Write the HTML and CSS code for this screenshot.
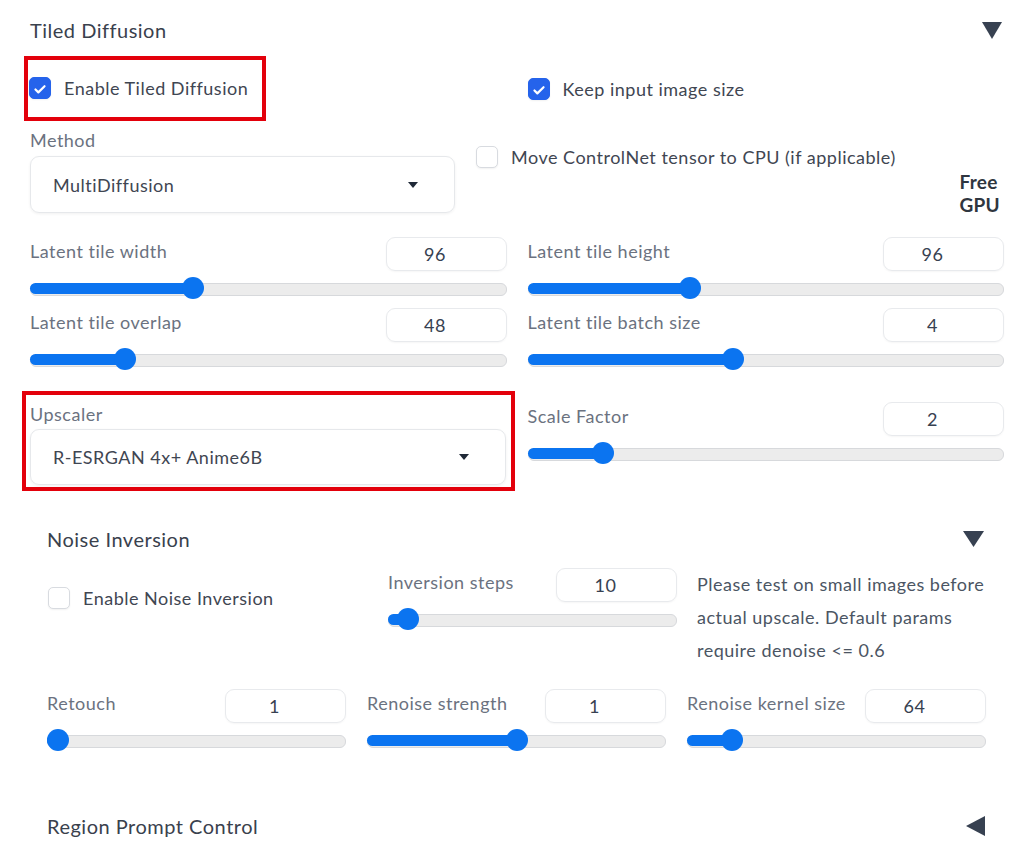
FILE: index.html
```html
<!DOCTYPE html>
<html>
<head>
<meta charset="utf-8">
<link rel="stylesheet" href="styles.css">
</head>
<body>
<div class="panel">
  <div class="head">
    <span class="title">Tiled Diffusion</span>
    <svg class="tri-down" width="20" height="17" viewBox="0 0 20 17"><path d="M0 0H20L10 17Z" fill="#374151"/></svg>
  </div>

  <div class="grid2 row1">
    <div><div class="redbox rb1"><label class="check"><span class="box on"><svg viewBox="0 0 22 22" width="22" height="22"><path d="M6 11.5l3.2 3.2L16 8" fill="none" stroke="#fff" stroke-width="2.4" stroke-linecap="round" stroke-linejoin="round"/></svg></span><span>Enable Tiled Diffusion</span></label></div></div>
    <div class="c-center"><label class="check"><span class="box on"><svg viewBox="0 0 22 22" width="22" height="22"><path d="M6 11.5l3.2 3.2L16 8" fill="none" stroke="#fff" stroke-width="2.4" stroke-linecap="round" stroke-linejoin="round"/></svg></span><span>Keep input image size</span></label></div>
  </div>

  <div class="row2">
    <div class="method">
      <div class="lbl">Method</div>
      <div class="dropdown"><span>MultiDiffusion</span><span class="caret"></span></div>
    </div>
    <div class="move"><label class="check"><span class="box"></span><span>Move ControlNet tensor to CPU (if applicable)</span></label></div>
    <div class="free">Free<br>GPU</div>
  </div>

  <div class="grid2 sliders">
    <div class="sl">
      <div class="sl-top"><span class="lbl">Latent tile width</span><span class="num">96</span></div>
      <div class="track" style="--p:34.2%"><div class="fill"></div><div class="thumb"></div></div>
    </div>
    <div class="sl">
      <div class="sl-top"><span class="lbl">Latent tile height</span><span class="num">96</span></div>
      <div class="track" style="--p:34.2%"><div class="fill"></div><div class="thumb"></div></div>
    </div>
    <div class="sl">
      <div class="sl-top"><span class="lbl">Latent tile overlap</span><span class="num">48</span></div>
      <div class="track" style="--p:20%"><div class="fill"></div><div class="thumb"></div></div>
    </div>
    <div class="sl">
      <div class="sl-top"><span class="lbl">Latent tile batch size</span><span class="num">4</span></div>
      <div class="track" style="--p:43.2%"><div class="fill"></div><div class="thumb"></div></div>
    </div>
  </div>

  <div class="grid2 ups-row">
    <div class="redbox rb2">
      <div class="lbl">Upscaler</div>
      <div class="dropdown dd2"><span>R-ESRGAN 4x+ Anime6B</span><span class="caret"></span></div>
    </div>
    <div class="sl scale">
      <div class="sl-top"><span class="lbl">Scale Factor</span><span class="num">2</span></div>
      <div class="track" style="--p:15.9%"><div class="fill"></div><div class="thumb"></div></div>
    </div>
  </div>

  <div class="sub">
    <div class="head sub-head">
      <span class="title">Noise Inversion</span>
      <svg class="tri-down" width="21" height="16" viewBox="0 0 21 16"><path d="M0 0H21L10.5 16Z" fill="#374151"/></svg>
    </div>
    <div class="noise-row">
      <div class="ni-check"><label class="check"><span class="box"></span><span>Enable Noise Inversion</span></label></div>
      <div class="sl">
        <div class="sl-top"><span class="lbl">Inversion steps</span><span class="num">10</span></div>
        <div class="track" style="--p:6.9%"><div class="fill"></div><div class="thumb"></div></div>
      </div>
      <p class="note">Please test on small images before actual upscale. Default params require denoise &lt;= 0.6</p>
    </div>
    <div class="grid3">
      <div class="sl">
        <div class="sl-top"><span class="lbl">Retouch</span><span class="num">1</span></div>
        <div class="track" style="--p:3.7%"><div class="fill"></div><div class="thumb"></div></div>
      </div>
      <div class="sl">
        <div class="sl-top"><span class="lbl">Renoise strength</span><span class="num">1</span></div>
        <div class="track" style="--p:50%"><div class="fill"></div><div class="thumb"></div></div>
      </div>
      <div class="sl">
        <div class="sl-top"><span class="lbl">Renoise kernel size</span><span class="num">64</span></div>
        <div class="track" style="--p:15%"><div class="fill"></div><div class="thumb"></div></div>
      </div>
    </div>
  </div>

  <div class="sub">
    <div class="head region-head">
      <span class="title">Region Prompt Control</span>
      <svg width="19" height="20" viewBox="0 0 19 20"><path d="M19 0V20L0 10Z" fill="#374151"/></svg>
    </div>
  </div>
</div>
</body>
</html>
```

FILE: styles.css
```css
* { box-sizing: border-box; }
body {
  margin: 0;
  background: #fff;
  font-family: Lato, "Noto Sans", sans-serif;
  font-size: 18px;
  letter-spacing: 0.5px;
  color: #374151;
}
.panel { padding: 0 20px 0 30px; width: 1024px; }
.head {
  height: 56px;
  display: flex;
  align-items: center;
  justify-content: space-between;
  padding-top: 4px;
}
.title { font-size: 20px; color: #3a414d; }
.tri-down { margin-right: 2px; }

.grid2 { display: grid; grid-template-columns: 1fr 1fr; column-gap: 21px; }
.row1 { height: 65px; }
.c-center { display: flex; align-items: center; }

.redbox { border: 4px solid #e3000b; }
.rb1 {
  display: inline-flex;
  margin-left: -6px;
  padding: 17px 14px 18px 1px;
}
.rb2 {
  margin: 0 -8px 0 -8px;
  padding: 8px 5px 2px 4px;
}

.check { display: inline-flex; align-items: center; gap: 13px; color: #3f4652; line-height: 22px; }
.box {
  width: 22px; height: 22px; flex: none;
  border-radius: 5px;
  border: 1px solid #d8dbe0;
  background: #fff;
  box-shadow: 0 1px 2px rgba(0,0,0,.06);
  display: flex;
}
.box.on { background: #2563eb; border-color: #2563eb; }

.lbl { color: #6b7280; line-height: 22px; white-space: nowrap; }

.row2 { display: flex; height: 92px; }
.method { width: 425px; padding-top: 8px; }
.method .lbl { margin-bottom: 5px; }
.dropdown {
  height: 57px;
  border: 1px solid #e6e8eb;
  border-radius: 9px;
  box-shadow: 0 1px 3px rgba(0,0,0,.06);
  display: flex;
  align-items: center;
  justify-content: space-between;
  padding: 0 36px 0 22px;
  color: #3f4652;
}
.dd2 { margin-top: 4px; height: 56px; }
.caret {
  width: 0; height: 0;
  border-left: 5.5px solid transparent;
  border-right: 5.5px solid transparent;
  border-top: 6px solid #1f2937;
}
.move { flex: 1; padding: 25px 0 0 21px; }
.free {
  padding: 49px 4px 0 0;
  font-size: 19px;
  line-height: 23px;
  font-weight: 700;
  letter-spacing: 0.3px;
  color: #2f3640;
  text-align: left;
}

.sliders { margin-top: 24px; row-gap: 9px; }
.sl-top { display: flex; justify-content: space-between; align-items: flex-start; }
.sl-top .lbl { margin-top: 3px; }
.num {
  width: 121px; height: 34px;
  border: 1px solid #e8eaed;
  border-radius: 9px;
  box-shadow: 0 1px 2px rgba(0,0,0,.04);
  display: flex; align-items: center; justify-content: center;
  padding-right: 22px;
  color: #374151;
}
.track {
  position: relative;
  height: 22px;
  margin-top: 6px;
}
.track::before {
  content: "";
  position: absolute; left: 0; right: 0; top: 6px;
  height: 11px;
  border-radius: 6px;
  background: #ececec;
  border: 1px solid #d7d9dc;
}
.fill {
  position: absolute; left: 0; top: 6px;
  height: 11px;
  width: var(--p);
  border-radius: 6px 0 0 6px;
  background: #0b74f0;
}
.thumb {
  position: absolute; top: 0;
  left: var(--p);
  width: 22px; height: 22px;
  margin-left: -11px;
  border-radius: 50%;
  background: #0b74f0;
}

.ups-row { margin-top: 21px; }
.scale { padding-top: 11px; }

.sub { padding: 0 18px 0 17px; }
.sub-head { height: 73px; padding-top: 23px; }
.noise-row {
  display: grid;
  grid-template-columns: 321px 289px 1fr;
  column-gap: 20px;
  height: 125px;
  padding-top: 4px;
}
.ni-check { padding-top: 19px; padding-left: 1px; }
.note {
  margin: 0;
  line-height: 33px;
  color: #4b5563;
}
.grid3 { display: grid; grid-template-columns: 1fr 1fr 1fr; column-gap: 21px; }
.region-head { height: 95px; padding-top: 55px; }
.region-head svg { margin-right: 1px; }
```
